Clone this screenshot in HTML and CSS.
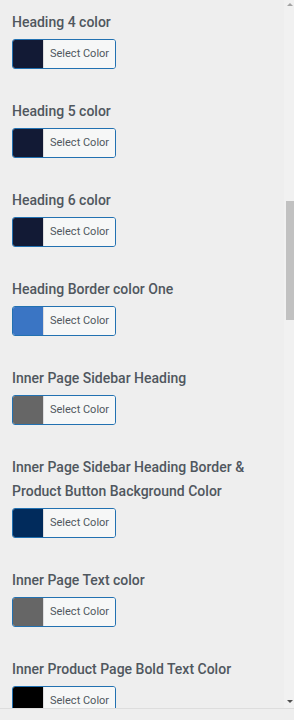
FILE: index.html
```html
<!DOCTYPE html>
<html>
<head>
<meta charset="utf-8">
<link rel="stylesheet" href="styles.css">
</head>
<body>
<div class="frame">
  <div class="panel">
    <div class="content">
      <div class="control">
        <div class="label">Heading 4 color</div>
        <button class="color-btn"><span class="swatch" style="background:#121a35"></span><span class="btn-text">Select Color</span></button>
      </div>
      <div class="control">
        <div class="label">Heading 5 color</div>
        <button class="color-btn"><span class="swatch" style="background:#121a35"></span><span class="btn-text">Select Color</span></button>
      </div>
      <div class="control">
        <div class="label">Heading 6 color</div>
        <button class="color-btn"><span class="swatch" style="background:#121a35"></span><span class="btn-text">Select Color</span></button>
      </div>
      <div class="control">
        <div class="label">Heading Border color One</div>
        <button class="color-btn"><span class="swatch" style="background:#3a75c4"></span><span class="btn-text">Select Color</span></button>
      </div>
      <div class="control">
        <div class="label">Inner Page Sidebar Heading</div>
        <button class="color-btn"><span class="swatch" style="background:#666666"></span><span class="btn-text">Select Color</span></button>
      </div>
      <div class="control">
        <div class="label">Inner Page Sidebar Heading Border &amp; Product Button Background Color</div>
        <button class="color-btn"><span class="swatch" style="background:#012b5c"></span><span class="btn-text">Select Color</span></button>
      </div>
      <div class="control">
        <div class="label">Inner Page Text color</div>
        <button class="color-btn"><span class="swatch" style="background:#666666"></span><span class="btn-text">Select Color</span></button>
      </div>
      <div class="control">
        <div class="label">Inner Product Page Bold Text Color</div>
        <button class="color-btn"><span class="swatch" style="background:#000000"></span><span class="btn-text">Select Color</span></button>
      </div>
    </div>
    <div class="scrollbar">
      <span class="arrow up"></span>
      <div class="thumb"></div>
      <span class="arrow down"></span>
    </div>
  </div>
  <div class="footer"></div>
</div>
</body>
</html>
```

FILE: styles.css
```css
* { box-sizing: border-box; }
html, body {
  margin: 0;
  padding: 0;
  background: #eeeeee;
  font-family: Roboto, "Noto Sans", "Liberation Sans", sans-serif;
}
.frame {
  width: 294px;
  height: 720px;
  display: flex;
  flex-direction: column;
  overflow: hidden;
}
.panel {
  height: 708px;
  display: flex;
  overflow: hidden;
}
.content {
  flex: 1;
  padding: 10px 14px 0 12px;
  overflow: hidden;
}
.control {
  padding-bottom: 30px;
}
.label {
  font-size: 14px;
  font-weight: 500;
  line-height: 24px;
  color: #50575e;
  margin-bottom: 5px;
}
.color-btn {
  display: flex;
  width: 104px;
  height: 30px;
  padding: 0;
  margin: 0;
  border: 1px solid #2271b1;
  border-radius: 3px;
  overflow: hidden;
  background: #f6f7f7;
  font-family: inherit;
}
.swatch {
  width: 30px;
  height: 100%;
  flex: none;
}
.btn-text {
  flex: 1;
  border-left: 1px solid #dcdcde;
  background: #f6f7f7;
  padding: 0 6px;
  font-size: 11px;
  line-height: 28px;
  color: #50575e;
  text-align: left;
  white-space: nowrap;
}
.scrollbar {
  width: 10px;
  flex: none;
  background: #f1f1f1;
  display: flex;
  flex-direction: column;
  align-items: flex-end;
}
.arrow {
  display: block;
  width: 0;
  height: 0;
  border-left: 3px solid transparent;
  border-right: 3px solid transparent;
  margin-right: 1px;
}
.arrow.up {
  margin-top: 3px;
  border-bottom: 3px solid #a3a3a3;
}
.arrow.down {
  margin-top: auto;
  margin-bottom: 5px;
  border-top: 3px solid #505050;
}
.thumb {
  width: 8px;
  height: 119px;
  margin-top: 195px;
  background: #c1c1c1;
}
.footer {
  flex: 1;
  border-top: 1px solid #dddddd;
  background: #eeeeee;
}
```
